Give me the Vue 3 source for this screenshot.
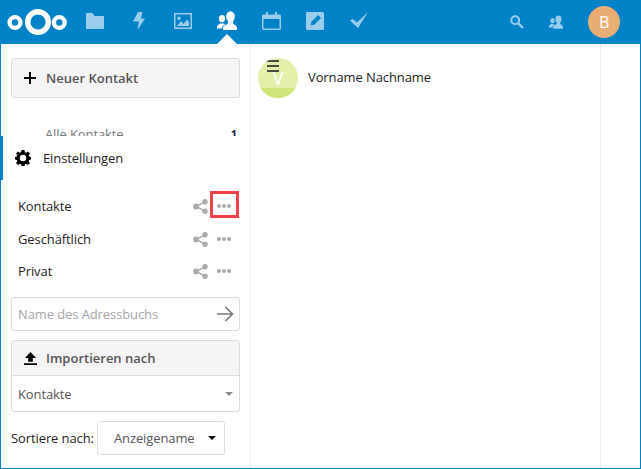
<script setup>
const books = [
  { name: 'Kontakte', cls: 'row-a', marked: true },
  { name: 'Geschäftlich', cls: 'row-b', marked: false },
  { name: 'Privat', cls: 'row-c', marked: false },
]
</script>

<template>
  <div class="frame">
    <header class="top">
      <svg class="logo" width="62" height="30" viewBox="0 0 62 30">
        <circle cx="9" cy="15.500" r="5.400" fill="none" stroke="#fff" stroke-width="4.400" />
        <circle cx="32" cy="15" r="10.300" fill="none" stroke="#fff" stroke-width="5.400" />
        <circle cx="53.300" cy="15.500" r="5.400" fill="none" stroke="#fff" stroke-width="4.400" />
      </svg>
      <nav class="apps">
        <svg class="app dim" viewBox="0 0 18 16" width="18" height="16"><path d="M0 1C0 .4.400 0 1 0h5.500L8.500 3H17c.6 0 1 .4 1 1v11c0 .6-.4 1-1 1H1c-.6 0-1-.4-1-1z" fill="#fff" /></svg>
        <svg class="app dim" viewBox="0 0 12 18" width="12" height="18"><path d="M5 0h4.500L8 6.500h4L4.500 18l1.300-8.500H0z" fill="#fff" /></svg>
        <svg class="app dim" viewBox="0 0 18 16" width="18" height="16"><path fill-rule="evenodd" d="M0 0h18v16H0zM1.500 1.500v13h15v-13zM3 13l4-5 2.500 3L13 6.500 15 9v4zM5 3.500a1.700 1.700 0 1 1 0 3.400 1.700 1.700 0 0 1 0-3.400z" fill="#fff" /></svg>
        <span class="current">
          <svg viewBox="0 0 20 19" width="20" height="19" fill="#fff">
            <ellipse cx="13.500" cy="5.600" rx="4.300" ry="5.400" />
            <ellipse cx="5" cy="7.600" rx="3.100" ry="3.700" />
            <path d="M6 19v-2c0-2.500 3.500-3 5-4.500V10h5v2.500c1.500 1.500 4 2 4 4.500v2z" />
            <path d="M0 17.500V16c0-2 2-2.500 3-3.500h4c.3.4.7.7 1.200 1C6.200 14.400 5 15.500 5 17.500z" />
          </svg>
          <i class="notch"></i>
        </span>
        <svg class="app dim" viewBox="0 0 19 18" width="19" height="18"><path fill-rule="evenodd" d="M4 0h2v2.500h7V0h2v2.500h2.500c.8 0 1.500.7 1.500 1.500v12.500c0 .8-.7 1.500-1.500 1.500h-16C.7 18 0 17.300 0 16.500V4c0-.8.700-1.500 1.500-1.500H4zM1.500 7v9.500h16V7z" fill="#fff" /></svg>
        <svg class="app dim" viewBox="0 0 18 18" width="18" height="18"><path fill-rule="evenodd" d="M1.500 0h15c.8 0 1.500.7 1.500 1.500v15c0 .8-.7 1.500-1.500 1.500h-15C.7 18 0 17.300 0 16.500v-15C0 .7.700 0 1.500 0zM12 3L5.500 9.500 4.500 13.500l4-1L15 6z" fill="#fff" /></svg>
        <svg class="app dim" viewBox="0 0 18 16" width="18" height="16"><path d="M0 8.500L2.500 7 7 10.500 18 0 8 16z" fill="#fff" /></svg>
      </nav>
      <div class="right">
        <svg class="dim" viewBox="0 0 14 14" width="14" height="14"><circle cx="5.200" cy="5.200" r="3.900" fill="none" stroke="#fff" stroke-width="2" /><path d="M8.200 8.200L13 13" stroke="#fff" stroke-width="2.400" /></svg>
        <svg class="dim" viewBox="0 0 20 19" width="14" height="14" fill="#fff">
          <ellipse cx="13.500" cy="5.600" rx="4.300" ry="5.400" />
          <ellipse cx="5" cy="7.600" rx="3.100" ry="3.700" />
          <path d="M6 19v-2c0-2.500 3.500-3 5-4.500V10h5v2.500c1.500 1.500 4 2 4 4.500v2z" />
          <path d="M0 17.500V16c0-2 2-2.500 3-3.500h4c.3.4.7.7 1.200 1C6.200 14.400 5 15.500 5 17.500z" />
        </svg>
        <span class="avatar">B</span>
      </div>
    </header>

    <main class="body">
      <aside class="side">
        <div class="side-top">
          <button class="new">
            <svg viewBox="0 0 12 12" width="12" height="12"><path d="M5 0h2v5h5v2H7v5H5V7H0V5h5z" fill="#000" /></svg>
            <span>Neuer Kontakt</span>
          </button>
          <div class="clip">
            <span>Alle Kontakte</span><b>1</b>
          </div>
        </div>
        <div class="settings">
          <svg viewBox="0 0 16 16" width="16" height="16"><path fill-rule="evenodd" d="M6.500 0h3l.4 2.200 1.200.5L13 1.400l2 2-1.300 1.900.5 1.200L16 7v2.600l-1.800.4-.5 1.200 1.300 1.800-2 2-1.900-1.300-1.200.5L9.500 16h-3l-.4-1.800-1.200-.5L3 15l-2-2 1.300-1.800-.5-1.200L0 9.600V7l1.800-.5.500-1.200L1 3.400l2-2 1.900 1.300 1.200-.5zM8 4.800a3.200 3.200 0 1 0 0 6.400 3.200 3.200 0 0 0 0-6.400z" fill="#000" /></svg>
          <span>Einstellungen</span>
        </div>
        <ul class="books">
          <li v-for="b in books" :key="b.name" :class="b.cls">
            <span class="name">{{ b.name }}</span>
            <svg class="share" viewBox="0 0 15 15" width="15" height="15"><circle cx="12" cy="2.800" r="2.700" fill="#aaa" /><circle cx="12" cy="12.200" r="2.700" fill="#aaa" /><circle cx="3" cy="7.500" r="2.900" fill="#aaa" /><path d="M12 2.800L3 7.500l9 4.700" fill="none" stroke="#aaa" stroke-width="1.500" /></svg>
            <span class="more" :class="{ marked: b.marked }"><i></i><i></i><i></i></span>
          </li>
        </ul>
        <div class="field">
          <span>Name des Adressbuchs</span>
          <svg viewBox="0 0 17 16" width="17" height="16"><path d="M0 8h15.500M8.500 1l7 7-7 7" fill="none" stroke="#7a7a7a" stroke-width="1.700" /></svg>
        </div>
        <div class="import">
          <div class="import-head">
            <svg viewBox="0 0 14 14" width="13" height="13"><path d="M7 0l6 6.500H9.500v4h-5v-4H1zM0 12h14v2H0z" fill="#000" /></svg>
            <span>Importieren nach</span>
          </div>
          <div class="import-select"><span>Kontakte</span><i class="caret"></i></div>
        </div>
        <div class="sort">
          <span>Sortiere nach:</span>
          <div class="sort-select"><span>Anzeigename</span><i class="caret dark"></i></div>
        </div>
      </aside>
      <section class="content">
        <div class="contact">
          <div class="pic">
            <span class="letter">V</span>
            <span class="band"></span>
            <span class="burger"><i></i><i></i><i></i></span>
          </div>
          <span class="full-name">Vorname Nachname</span>
        </div>
      </section>
      <div class="details"></div>
    </main>
  </div>
</template>

<style>
html, body { margin: 0; background: #fff; }
</style>

<style scoped>
.frame {
  width: 641px;
  height: 469px;
  box-sizing: border-box;
  border: 1px solid #0082c9;
  border-top: 0;
  display: flex;
  flex-direction: column;
  overflow: hidden;
  font-family: "Open Sans", sans-serif;
  font-size: 13px;
  letter-spacing: -0.1px;
  color: #222;
}
.top {
  height: 44px;
  flex: none;
  background: #0082c9;
  display: flex;
  align-items: center;
  margin-right: -1px;
}
.logo { margin-left: 5px; flex: none; }
.apps {
  display: flex;
  align-items: center;
  height: 44px;
  margin-left: 17px;
  width: 308px;
  position: relative;
}
.app { position: absolute; }
.apps > :nth-child(1) { left: 1px; top: 13px; }
.apps > :nth-child(2) { left: 48px; top: 12px; }
.apps > :nth-child(3) { left: 89px; top: 13px; }
.apps > :nth-child(5) { left: 177px; top: 12px; }
.apps > :nth-child(6) { left: 221px; top: 12px; }
.apps > :nth-child(7) { left: 265px; top: 12px; }
.current {
  position: absolute;
  left: 132px;
  top: 11px;
  width: 20px;
  height: 33px;
}
.notch {
  position: absolute;
  left: 0;
  bottom: 0;
  border: 10px solid transparent;
  border-top: 0;
  border-bottom-color: #fff;
}
.dim { opacity: 0.6; }
.right {
  margin-left: auto;
  display: flex;
  align-items: center;
  padding-right: 21px;
}
.right svg:first-child { margin-right: 25px; }
.right svg:nth-child(2) { margin-right: 25px; }
.avatar {
  width: 32px;
  height: 32px;
  border-radius: 50%;
  background: #e9ae74;
  color: #fff;
  font-size: 16px;
  display: flex;
  align-items: center;
  justify-content: center;
}
.body {
  flex: 1;
  display: flex;
  min-height: 0;
}
.side {
  width: 250px;
  box-sizing: border-box;
  border-right: 1px solid #eee;
  flex: none;
  display: flex;
  flex-direction: column;
}
.side-top { padding: 14px 10px 0 10px; }
.new {
  display: flex;
  align-items: center;
  gap: 10px;
  width: 100%;
  height: 40px;
  box-sizing: border-box;
  border: 1px solid #dbdbdb;
  border-radius: 3px;
  background: #f5f5f5;
  font: 600 13px "Open Sans", sans-serif;
  color: #555;
  padding: 0 0 0 12px;
}
.clip {
  height: 38px;
  overflow: hidden;
  display: flex;
  justify-content: space-between;
  align-items: flex-start;
  padding: 27px 3px 0 34px;
  box-sizing: border-box;
  color: #777;
  line-height: 18px;
}
.clip b { color: #223; font-size: 11px; font-weight: 700; }
.settings {
  height: 44px;
  flex: none;
  box-sizing: border-box;
  border-left: 2px solid #0082c9;
  padding-left: 12px;
  display: flex;
  align-items: center;
  gap: 12px;
  color: #222;
  background: #fff;
}
.books {
  list-style: none;
  margin: 0;
  padding: 0 0 0 17px;
  height: 117px;
  flex: none;
  position: relative;
}
.books li {
  position: absolute;
  left: 17px;
  right: 0;
  display: flex;
  align-items: center;
  height: 20px;
}
.row-a { top: 16px; }
.row-b { top: 49px; }
.row-c { top: 81px; }
.name { flex: 1; }
.share { margin-right: 9px; }
.more {
  width: 14px;
  margin-right: 19px;
  display: flex;
  gap: 1px;
  position: relative;
}
.more i {
  width: 4px;
  height: 4px;
  border-radius: 50%;
  background: #aaa;
}
.marked::after {
  content: "";
  position: absolute;
  left: -7px;
  top: -13px;
  width: 23px;
  height: 21px;
  border: 3px solid #f0414b;
}
.field {
  margin: 0 10px;
  height: 34px;
  box-sizing: border-box;
  border: 1px solid #dbdbdb;
  border-radius: 3px;
  display: flex;
  align-items: center;
  justify-content: space-between;
  padding: 0 5px 0 6px;
  color: #a5a5a5;
  flex: none;
}
.import {
  margin: 9px 10px 0;
  border: 1px solid #dbdbdb;
  border-radius: 3px;
  flex: none;
}
.import-head {
  height: 34px;
  background: #f5f5f5;
  border-bottom: 1px solid #dbdbdb;
  display: flex;
  align-items: center;
  gap: 9px;
  padding-left: 12px;
  font-weight: 600;
  letter-spacing: 0;
  color: #555;
}
.import-select {
  height: 35px;
  display: flex;
  align-items: center;
  justify-content: space-between;
  padding: 0 6px;
  color: #555;
}
.caret {
  border: 4px solid transparent;
  border-top-color: #888;
  border-bottom: 0;
}
.caret.dark { border-top-color: #000; }
.sort {
  margin: 9px 0 0 10px;
  display: flex;
  align-items: center;
  gap: 3px;
  color: #222;
}
.sort-select {
  width: 128px;
  height: 34px;
  box-sizing: border-box;
  border: 1px solid #dbdbdb;
  border-radius: 3px;
  display: flex;
  align-items: center;
  justify-content: space-between;
  padding: 0 8px 0 16px;
  color: #555;
}
.content {
  width: 350px;
  box-sizing: border-box;
  border-right: 1px solid #eee;
  flex: none;
}
.details { flex: 1; }
.contact {
  display: flex;
  align-items: center;
  gap: 10px;
  padding: 14px 0 0 7px;
  color: #222;
}
.full-name { margin-bottom: 2px; }
.pic {
  width: 40px;
  height: 40px;
  border-radius: 50%;
  background: #e1efab;
  position: relative;
  overflow: hidden;
}
.letter {
  position: absolute;
  left: 0;
  right: 0;
  top: 8px;
  text-align: center;
  color: #fff;
  font-size: 18px;
  line-height: 24px;
}
.band {
  position: absolute;
  left: 0;
  right: 0;
  bottom: 0;
  height: 10px;
  background: #cfe77a;
}
.burger {
  position: absolute;
  left: 9px;
  top: 2px;
  width: 12px;
  display: flex;
  flex-direction: column;
  gap: 3px;
}
.burger i {
  height: 2px;
  background: #4a4a40;
}
</style>
